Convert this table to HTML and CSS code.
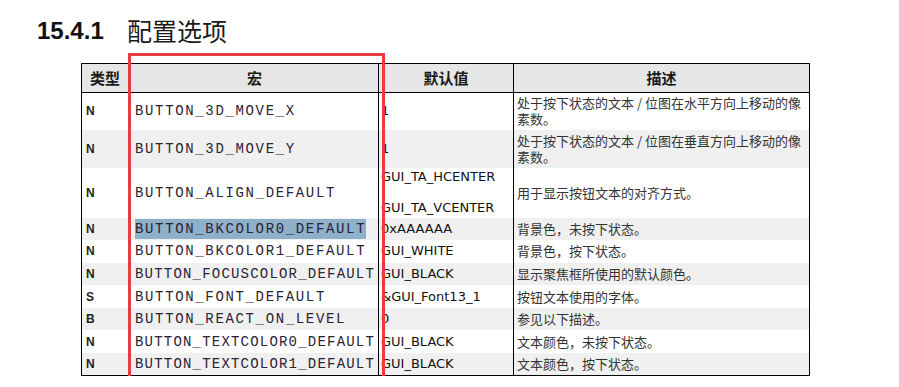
FILE: index.html
```html
<!DOCTYPE html>
<html lang="zh">
<head>
<meta charset="utf-8">
<link rel="stylesheet" href="styles.css">
</head>
<body>
<h1 class="title"><span class="num">15.4.1</span><span class="zh">配置选项</span></h1>
<div class="wrap">
  <table class="cfg">
    <colgroup>
      <col class="c1"><col class="c2"><col class="c3"><col class="c4">
    </colgroup>
    <thead>
      <tr class="hd"><th>类型</th><th>宏</th><th>默认值</th><th>描述</th></tr>
    </thead>
    <tbody>
      <tr class="r1"><td class="t">N</td><td class="m">BUTTON_3D_MOVE_X</td><td class="v">1</td><td class="d">处于按下状态的文本 / 位图在水平方向上移动的像素数。</td></tr>
      <tr class="r2 g"><td class="t">N</td><td class="m">BUTTON_3D_MOVE_Y</td><td class="v">1</td><td class="d">处于按下状态的文本 / 位图在垂直方向上移动的像素数。</td></tr>
      <tr class="r3"><td class="t">N</td><td class="m">BUTTON_ALIGN_DEFAULT</td><td class="v multi">GUI_TA_HCENTER<br>|<br>GUI_TA_VCENTER</td><td class="d">用于显示按钮文本的对齐方式。</td></tr>
      <tr class="rs g"><td class="t">N</td><td class="m"><span class="sel">BUTTON_BKCOLOR0_DEFAULT</span></td><td class="v">0xAAAAAA</td><td class="d">背景色，未按下状态。</td></tr>
      <tr class="rs"><td class="t">N</td><td class="m">BUTTON_BKCOLOR1_DEFAULT</td><td class="v">GUI_WHITE</td><td class="d">背景色，按下状态。</td></tr>
      <tr class="rs g"><td class="t">N</td><td class="m tight">BUTTON_FOCUSCOLOR_DEFAULT</td><td class="v">GUI_BLACK</td><td class="d">显示聚焦框所使用的默认颜色。</td></tr>
      <tr class="rs"><td class="t">S</td><td class="m">BUTTON_FONT_DEFAULT</td><td class="v">&amp;GUI_Font13_1</td><td class="d">按钮文本使用的字体。</td></tr>
      <tr class="rs g"><td class="t">B</td><td class="m">BUTTON_REACT_ON_LEVEL</td><td class="v">0</td><td class="d">参见以下描述。</td></tr>
      <tr class="rs"><td class="t">N</td><td class="m tight">BUTTON_TEXTCOLOR0_DEFAULT</td><td class="v">GUI_BLACK</td><td class="d">文本颜色，未按下状态。</td></tr>
      <tr class="rs g"><td class="t">N</td><td class="m tight">BUTTON_TEXTCOLOR1_DEFAULT</td><td class="v">GUI_BLACK</td><td class="d">文本颜色，按下状态。</td></tr>
    </tbody>
  </table>
  <div class="mark"></div>
</div>
</body>
</html>
```
FILE: styles.css
```css
html, body {
  margin: 0;
  padding: 0;
  background: #ffffff;
}
body {
  padding: 16px 0 0 37px;
  font-family: "Liberation Sans", Arial, sans-serif;
}
.title {
  margin: 0;
  height: 47px;
  display: flex;
  align-items: flex-start;
  font-size: 24px;
  line-height: 30px;
  color: #111;
}
.title .num {
  font-weight: bold;
  width: 90px;
}
.title .zh {
  font-family: "Noto Sans CJK SC", sans-serif;
  font-weight: normal;
  font-size: 25px;
  line-height: 30px;
  color: #1a1a1a;
  margin-top: -1px;
}
.wrap {
  position: relative;
  margin-left: 44px;
  width: 728px;
}
.cfg {
  border-collapse: collapse;
  table-layout: fixed;
  width: 728px;
  border: 1px solid #000;
}
.c1 { width: 49px; }
.c2 { width: 248px; }
.c3 { width: 135px; }
.c4 { width: 296px; }
.cfg th, .cfg td {
  padding: 0;
  border-left: 1px solid #000;
  border-right: 1px solid #000;
  vertical-align: middle;
}
.hd {
  height: 29px;
  background: #e6e6e6;
}
.hd th {
  border-bottom: 1px solid #000;
  font-family: "Noto Sans CJK SC", sans-serif;
  font-weight: bold;
  font-size: 15px;
  line-height: 20px;
  color: #1a1a1a;
  text-align: center;
}
.hd th:first-child {
  text-align: left;
  padding-left: 8px;
}
.g { background: #f0f0f0; }
.r1 { height: 37px; }
.r2 { height: 38px; }
.r3 { height: 50px; }
.rs { height: 22.6px; }
.t {
  padding-left: 4px !important;
  font-weight: bold;
  font-size: 12px;
  color: #222;
}
.m {
  padding-left: 4px !important;
  font-family: "Liberation Mono", "Courier New", monospace;
  font-size: 14px;
  letter-spacing: 1.65px;
  color: #2b2233;
  white-space: nowrap;
}
.m.tight { letter-spacing: 1.2px; }
.sel {
  background: #8eb0c8;
  padding: 2px 0 2px 0;
}
.v {
  padding-left: 2px !important;
  font-family: "DejaVu Sans", Verdana, sans-serif;
  font-size: 13px;
  line-height: 16px;
  color: #111;
  white-space: nowrap;
}
.v.multi { line-height: 15.5px; }
.d {
  padding: 0 3px 0 3px !important;
  font-family: "Noto Sans CJK SC", sans-serif;
  font-size: 13px;
  line-height: 16px;
  color: #333;
}
.mark {
  position: absolute;
  left: 47px;
  top: -10px;
  width: 257px;
  height: 327px;
  box-sizing: border-box;
  border: 3px solid #ea3b3f;
  pointer-events: none;
}
```
